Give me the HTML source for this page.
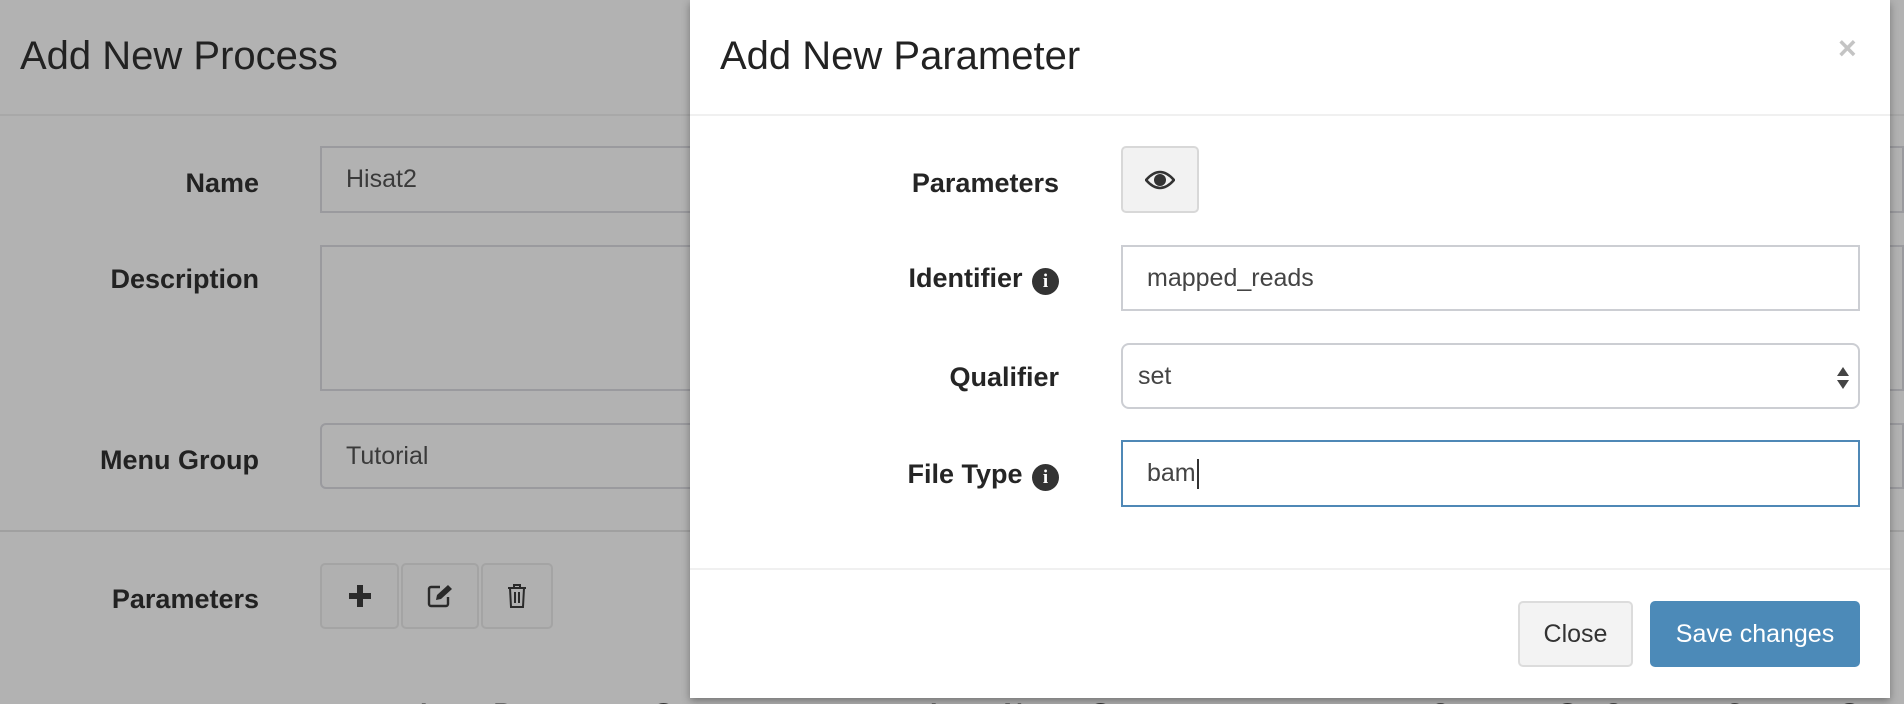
<!DOCTYPE html>
<html style="height:704px;overflow:hidden"><head><meta charset="utf-8"><style>
*{box-sizing:border-box;margin:0;padding:0}
body{width:1904px;height:704px;overflow:hidden;background:#b2b2b2;font-family:"Liberation Sans",sans-serif;position:relative;color:#222}
.a{position:absolute}
.t{font-size:40px;color:#222;line-height:1}
.lb{font-weight:bold;font-size:27px;line-height:1;text-align:right;color:#252525}
.bg .lb{color:#222}
.inp{position:absolute;border:2px solid #9a9a9e;font-size:25px;color:#3a3a3a;padding-left:50px;display:flex;align-items:center}
.btn{position:absolute;border:2px solid #a4a4a4;border-radius:5px;background:#b0b0b0;display:flex;align-items:center;justify-content:center}
.m{position:absolute;left:690px;top:0;width:1200px;height:698px;background:#fff;box-shadow:0 3px 8px rgba(0,0,0,.35)}
.mi{position:absolute;border:2px solid #ccced3;font-size:25px;color:#444;display:flex;align-items:center;background:#fff}
.info{display:inline-block;width:27px;height:27px;border-radius:50%;background:#333;color:#fff;font-size:19px;font-family:"Liberation Serif",serif;font-weight:bold;text-align:center;line-height:27px;vertical-align:0px;margin-left:2px}
.clip{position:absolute;left:0;top:680px;width:1904px;height:24px;overflow:hidden}
</style></head><body>
<div class="bg">
<div class="a t" style="left:20px;top:36px">Add New Process</div>
<div class="a" style="left:0;top:114px;width:1904px;height:2px;background:#a8a8a8"></div>
<div class="a lb" style="left:0;width:259px;top:170px">Name</div>
<div class="inp" style="left:320px;top:146px;width:1584px;height:67px;padding-left:24px">Hisat2</div>
<div class="a lb" style="left:0;width:259px;top:266px">Description</div>
<div class="inp" style="left:320px;top:245px;width:1584px;height:146px"></div>
<div class="a lb" style="left:0;width:259px;top:447px">Menu Group</div>
<div class="inp" style="left:320px;top:423px;width:1584px;height:66px;border-radius:6px 0 0 6px;padding-left:24px">Tutorial</div>
<div class="a" style="left:0;top:530px;width:1904px;height:2px;background:#a0a0a0"></div>
<div class="a lb" style="left:0;width:259px;top:586px">Parameters</div>
<div class="btn" style="left:320px;top:563px;width:79px;height:66px"><svg width="26" height="26" viewBox="0 0 26 26"><path d="M13 2v22M2 13h22" stroke="#2a2a2a" stroke-width="6"/></svg></div>
<div class="btn" style="left:401px;top:563px;width:78px;height:66px"><svg width="28" height="24" viewBox="0 0 28 24"><path d="M14 3H5a2 2 0 0 0-2 2v15a2 2 0 0 0 2 2h15a2 2 0 0 0 2-2v-7" fill="none" stroke="#2a2a2a" stroke-width="2.4"/><path d="M10 16l1-5L22 1l4 4-11 10z" fill="#2a2a2a"/></svg></div>
<div class="btn" style="left:481px;top:563px;width:72px;height:66px"><svg width="20" height="26" viewBox="0 0 20 26"><path d="M1 5h18M7 5V2h6v3M3 5l1 19h12l1-19M8 9v11M12 9v11" fill="none" stroke="#2a2a2a" stroke-width="2"/></svg></div>
<div class="clip">
<div class="a lb" style="left:420px;top:20px;white-space:nowrap">Input Parameters <span class="info">i</span></div>
<div class="a lb" style="left:930px;top:20px;white-space:nowrap">Input Name <span class="info">i</span></div>
<div class="a lb" style="left:1430px;top:20px;white-space:nowrap">Operator <span class="info">i</span> &nbsp; Operator Content <span class="info">i</span></div>
</div>
</div>
<div class="m">
<div class="a t" style="left:30px;top:36px">Add New Parameter</div>
<div class="a" style="left:1148px;top:32px;font-size:32px;font-weight:bold;color:#c4c4c4;line-height:1">×</div>
<div class="a" style="left:0;top:114px;width:1200px;height:2px;background:#f0f0f0"></div>
<div class="a lb" style="left:0;width:369px;top:170px">Parameters</div>
<div class="a" style="left:431px;top:146px;width:78px;height:67px;border:2px solid #d8d8d8;border-radius:5px;background:#f2f2f2;display:flex;align-items:center;justify-content:center"><svg width="30" height="20" viewBox="0 0 30 20"><path d="M1 10Q15-6 29 10Q15 26 1 10z" fill="none" stroke="#333" stroke-width="2.5"/><circle cx="15" cy="10" r="6" fill="#333"/></svg></div>
<div class="a lb" style="left:0;width:369px;top:265px">Identifier <span class="info">i</span></div>
<div class="mi" style="left:431px;top:245px;width:739px;height:66px;padding-left:24px">mapped_reads</div>
<div class="a lb" style="left:0;width:369px;top:364px">Qualifier</div>
<div class="mi" style="left:431px;top:343px;width:739px;height:66px;border-radius:8px;padding-left:15px">set<svg style="position:absolute;right:8px;top:22px" width="14" height="22" viewBox="0 0 14 22"><path d="M1 9L7 0l6 9zM1 13l6 9 6-9z" fill="#444"/></svg></div>
<div class="a lb" style="left:0;width:369px;top:461px">File Type <span class="info">i</span></div>
<div class="mi" style="left:431px;top:440px;width:739px;height:67px;border-color:#4f88b6;padding-left:24px">bam<span style="display:inline-block;width:2px;height:30px;background:#333;margin-left:1px"></span></div>
<div class="a" style="left:0;top:568px;width:1200px;height:2px;background:#f0f0f0"></div>
<div class="a" style="left:828px;top:601px;width:115px;height:66px;border:2px solid #dcdcdc;border-radius:5px;background:#f3f3f3;font-size:25px;color:#333;display:flex;align-items:center;justify-content:center">Close</div>
<div class="a" style="left:960px;top:601px;width:210px;height:66px;border-radius:5px;background:#4c8ab8;font-size:25px;color:#fff;display:flex;align-items:center;justify-content:center">Save changes</div>
</div>
</body></html>
